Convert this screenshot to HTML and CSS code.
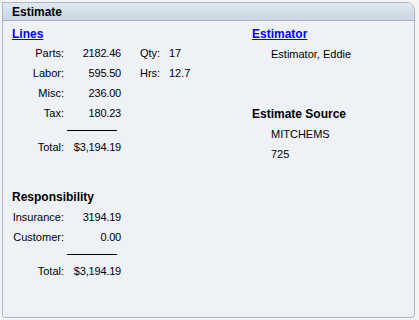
FILE: index.html
```html
<!DOCTYPE html>
<html lang="en">

<head>
    <meta charset="UTF-8">
    <title>Estimate</title>
    <link rel="stylesheet" href="styles.css">
</head>

<body>
    <div class="panel">
        <div class="panelHead">Estimate</div>
        <div class="panelBody">
            <div class="leftCol">
                <a href="#" class="link">Lines</a>
                <div class="rows lines">
                    <span class="lbl">Parts:</span><span class="val">2182.46</span><span class="lbl2">Qty:</span><span class="val2">17</span>
                    <span class="lbl">Labor:</span><span class="val">595.50</span><span class="lbl2">Hrs:</span><span class="val2">12.7</span>
                    <span class="lbl">Misc:</span><span class="val">236.00</span>
                    <span class="lbl">Tax:</span><span class="val">180.23</span>
                </div>
                <div class="rule"></div>
                <div class="rows">
                    <span class="lbl">Total:</span><span class="val">$3,194.19</span>
                </div>

                <div class="head resp">Responsibility</div>
                <div class="rows">
                    <span class="lbl">Insurance:</span><span class="val">3194.19</span>
                    <span class="lbl">Customer:</span><span class="val">0.00</span>
                </div>
                <div class="rule"></div>
                <div class="rows">
                    <span class="lbl">Total:</span><span class="val">$3,194.19</span>
                </div>
            </div>
            <div class="rightCol">
                <a href="#" class="link">Estimator</a>
                <div class="info">Estimator, Eddie</div>
                <div class="head source">Estimate Source</div>
                <div class="info">MITCHEMS</div>
                <div class="info">725</div>
            </div>
        </div>
    </div>
</body>

</html>
```

FILE: styles.css
```css
* {
    margin: 0;
    padding: 0;
}

body {
    background-color: #f4f4f4;
    font-family: "Liberation Sans", Arial, sans-serif;
    font-size: 11px;
    color: #000;
}

.panel {
    margin: 2px;
    width: 411px;
    height: 314px;
    border: 1px solid #a9b8cb;
    border-radius: 0 8px 4px 3px;
    background-color: #eef2f7;
    overflow: hidden;
}

.panelHead {
    height: 17px;
    padding-left: 9px;
    line-height: 18px;
    font-size: 12px;
    font-weight: bold;
    background: linear-gradient(#e2e9f0, #c9d5e1);
    border-bottom: 1px solid #a3b2c5;
}

.panelBody {
    display: flex;
    padding: 6px 0 0 9px;
}

.leftCol {
    width: 240px;
}

.link {
    display: block;
    height: 14px;
    line-height: 14px;
    font-size: 12px;
    font-weight: bold;
    color: #0000ff;
}

.rows {
    display: grid;
    grid-template-columns: 52px 57px 19px 29px 30px;
    grid-auto-rows: 20px;
    line-height: 20px;
}

.lines {
    margin-top: 2px;
}

.lbl {
    grid-column: 1;
    text-align: right;
}

.val {
    grid-column: 2;
    text-align: right;
    letter-spacing: -0.2px;
}

.lbl2 {
    grid-column: 4;
}

.val2 {
    grid-column: 5;
}

.rule {
    width: 50px;
    height: 1px;
    margin: 7px 0 6px 55px;
    background-color: #000;
}

.head {
    font-size: 12px;
    font-weight: bold;
    line-height: 14px;
}

.resp {
    margin-top: 33px;
    margin-bottom: 3px;
}

.info {
    padding-left: 19px;
    line-height: 20px;
}

.rightCol .link + .info {
    margin-top: 3px;
}

.source {
    margin-top: 43px;
    margin-bottom: 3px;
}
```
